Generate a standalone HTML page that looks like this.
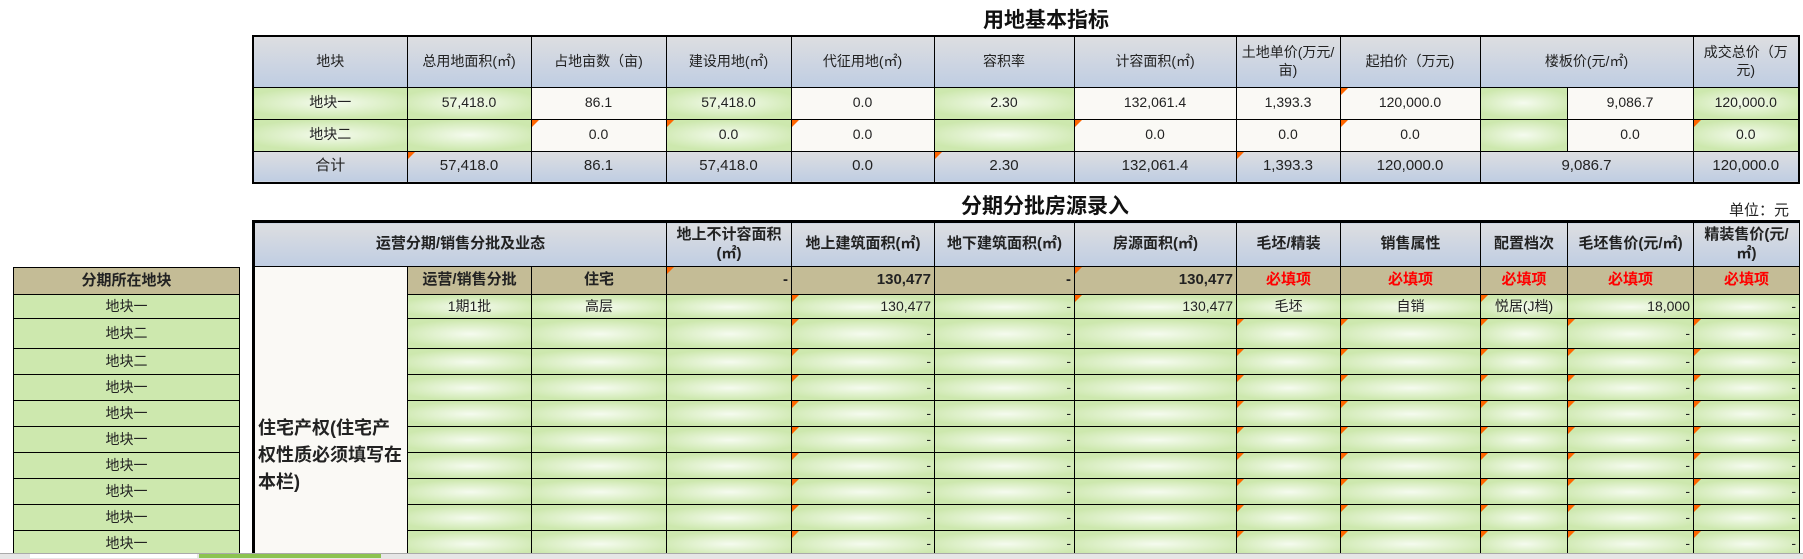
<!DOCTYPE html>
<html><head><meta charset="utf-8"><style>
html,body{margin:0;padding:0;width:1803px;height:558px;overflow:hidden;background:#fff;font-family:"Liberation Sans","Noto Sans CJK SC",sans-serif;color:#222}
table{border-collapse:collapse;table-layout:fixed;position:absolute}
td{border:1px solid #000;padding:0 3px;font-size:14px;text-align:center;white-space:nowrap;overflow:hidden;position:relative;line-height:1.25}
.h{background:linear-gradient(#dddee1,#bfcde2)}
.g{background:radial-gradient(ellipse 60% 50% at center,#f5fbef,#cde8ae)}
.w{background:#faf9f5}
.tan{background:#c4bc96;font-weight:bold;font-size:15px}
.r{text-align:right}
.red{color:#f00}
.b{font-weight:bold}
.t::before{content:"";position:absolute;left:0;top:0;border-top:7px solid #f60;border-right:7px solid transparent}
.title{position:absolute;font-weight:bold;font-size:21px;color:#111}
.lg{background:#cde8ae}
</style></head><body>
<div class="title" style="left:983px;top:4px">用地基本指标</div>
<table style="left:252px;top:35px;border:2px solid #000">
<colgroup><col style="width:154px"><col style="width:124px"><col style="width:135px"><col style="width:125px"><col style="width:143px"><col style="width:140px"><col style="width:162px"><col style="width:104px"><col style="width:140px"><col style="width:87px"><col style="width:126px"><col style="width:106px"></colgroup>
<tr style="height:51px"><td class="h">地块</td><td class="h">总用地面积(㎡)</td><td class="h">占地亩数（亩)</td><td class="h">建设用地(㎡)</td><td class="h">代征用地(㎡)</td><td class="h">容积率</td><td class="h">计容面积(㎡)</td><td class="h" style="white-space:normal">土地单价(万元/亩)</td><td class="h">起拍价（万元)</td><td class="h" colspan="2">楼板价(元/㎡)</td><td class="h" style="white-space:normal">成交总价（万元)</td></tr>
<tr style="height:32px"><td class="g">地块一</td><td class="g">57,418.0</td><td class="w">86.1</td><td class="g">57,418.0</td><td class="w">0.0</td><td class="g">2.30</td><td class="w">132,061.4</td><td class="w">1,393.3</td><td class="w t">120,000.0</td><td class="g"></td><td class="w">9,086.7</td><td class="g">120,000.0</td></tr>
<tr style="height:32px"><td class="g">地块二</td><td class="g"></td><td class="w t">0.0</td><td class="g t">0.0</td><td class="w t">0.0</td><td class="g"></td><td class="w t">0.0</td><td class="w">0.0</td><td class="w t">0.0</td><td class="g"></td><td class="w">0.0</td><td class="g t">0.0</td></tr>
<tr style="height:32px;font-size:15px"><td class="h" style="font-size:15px">合计</td><td class="h t" style="font-size:15px">57,418.0</td><td class="h" style="font-size:15px">86.1</td><td class="h" style="font-size:15px">57,418.0</td><td class="h" style="font-size:15px">0.0</td><td class="h t" style="font-size:15px">2.30</td><td class="h" style="font-size:15px">132,061.4</td><td class="h t" style="font-size:15px">1,393.3</td><td class="h" style="font-size:15px">120,000.0</td><td class="h" colspan="2" style="font-size:15px">9,086.7</td><td class="h" style="font-size:15px">120,000.0</td></tr>
</table>
<div class="title" style="left:961px;top:190px">分期分批房源录入</div>
<div style="position:absolute;left:1729px;top:199px;font-size:15px">单位：元</div>

<table style="left:13px;top:267px">
<colgroup><col style="width:226px"></colgroup>
<tr style="height:27px"><td class="tan">分期所在地块</td></tr>
<tr style="height:24px"><td class="lg">地块一</td></tr>
<tr style="height:30px"><td class="lg">地块二</td></tr>
<tr style="height:26px"><td class="lg">地块二</td></tr>
<tr style="height:26px"><td class="lg">地块一</td></tr>
<tr style="height:26px"><td class="lg">地块一</td></tr>
<tr style="height:26px"><td class="lg">地块一</td></tr>
<tr style="height:26px"><td class="lg">地块一</td></tr>
<tr style="height:26px"><td class="lg">地块一</td></tr>
<tr style="height:26px"><td class="lg">地块一</td></tr>
<tr style="height:26px"><td class="lg">地块一</td></tr>
</table>

<table style="left:252px;top:220px;border-top:3px solid #000;border-left:3px solid #000">
<colgroup><col style="width:154px"><col style="width:124px"><col style="width:135px"><col style="width:125px"><col style="width:143px"><col style="width:140px"><col style="width:162px"><col style="width:104px"><col style="width:140px"><col style="width:87px"><col style="width:126px"><col style="width:106px"></colgroup>
<tr style="height:45px;font-weight:bold"><td class="h b" colspan="3" style="font-size:15px">运营分期/销售分批及业态</td><td class="h b" style="white-space:normal;font-size:15px">地上不计容面积(㎡)</td><td class="h b" style="white-space:normal;font-size:15px">地上建筑面积(㎡)</td><td class="h b" style="white-space:normal;font-size:15px">地下建筑面积(㎡)</td><td class="h b" style="font-size:15px">房源面积(㎡)</td><td class="h b" style="font-size:15px">毛坯/精装</td><td class="h b" style="font-size:15px">销售属性</td><td class="h b" style="font-size:15px">配置档次</td><td class="h b" style="font-size:15px">毛坯售价(元/㎡)</td><td class="h b" style="white-space:normal;font-size:15px">精装售价(元/㎡)</td></tr>
<tr style="height:28px"><td class="w" rowspan="11" style="white-space:normal;text-align:left;font-weight:bold;font-size:18px;line-height:27px;padding:148px 2px 0 3px;vertical-align:top">住宅产权(住宅产权性质必须填写在本栏)</td><td class="tan">运营/销售分批</td><td class="tan">住宅</td><td class="tan t r">-</td><td class="tan r">130,477</td><td class="tan r">-</td><td class="tan t r">130,477</td><td class="tan red">必填项</td><td class="tan red">必填项</td><td class="tan red">必填项</td><td class="tan red">必填项</td><td class="tan red">必填项</td></tr>
<tr style="height:24px"><td class="g">1期1批</td><td class="g">高层</td><td class="g"></td><td class="g t r">130,477</td><td class="g r">-</td><td class="g t r">130,477</td><td class="g">毛坯</td><td class="g">自销</td><td class="g t">悦居(J档)</td><td class="g r">18,000</td><td class="g r">-</td></tr>
<tr style="height:30px"><td class="g"></td><td class="g"></td><td class="g"></td><td class="g t r">-</td><td class="g r">-</td><td class="g"></td><td class="g t"></td><td class="g t"></td><td class="g t"></td><td class="g t r">-</td><td class="g t r">-</td></tr>
<tr style="height:26px"><td class="g"></td><td class="g"></td><td class="g"></td><td class="g t r">-</td><td class="g r">-</td><td class="g"></td><td class="g t"></td><td class="g t"></td><td class="g t"></td><td class="g t r">-</td><td class="g t r">-</td></tr>
<tr style="height:26px"><td class="g"></td><td class="g"></td><td class="g"></td><td class="g t r">-</td><td class="g r">-</td><td class="g"></td><td class="g t"></td><td class="g t"></td><td class="g t"></td><td class="g t r">-</td><td class="g t r">-</td></tr>
<tr style="height:26px"><td class="g"></td><td class="g"></td><td class="g"></td><td class="g t r">-</td><td class="g r">-</td><td class="g"></td><td class="g t"></td><td class="g t"></td><td class="g t"></td><td class="g t r">-</td><td class="g t r">-</td></tr>
<tr style="height:26px"><td class="g"></td><td class="g"></td><td class="g"></td><td class="g t r">-</td><td class="g r">-</td><td class="g"></td><td class="g t"></td><td class="g t"></td><td class="g t"></td><td class="g t r">-</td><td class="g t r">-</td></tr>
<tr style="height:26px"><td class="g"></td><td class="g"></td><td class="g"></td><td class="g t r">-</td><td class="g r">-</td><td class="g"></td><td class="g t"></td><td class="g t"></td><td class="g t"></td><td class="g t r">-</td><td class="g t r">-</td></tr>
<tr style="height:26px"><td class="g"></td><td class="g"></td><td class="g"></td><td class="g t r">-</td><td class="g r">-</td><td class="g"></td><td class="g t"></td><td class="g t"></td><td class="g t"></td><td class="g t r">-</td><td class="g t r">-</td></tr>
<tr style="height:26px"><td class="g"></td><td class="g"></td><td class="g"></td><td class="g t r">-</td><td class="g r">-</td><td class="g"></td><td class="g t"></td><td class="g t"></td><td class="g t"></td><td class="g t r">-</td><td class="g t r">-</td></tr>
<tr style="height:26px"><td class="g"></td><td class="g"></td><td class="g"></td><td class="g t r">-</td><td class="g r">-</td><td class="g"></td><td class="g t"></td><td class="g t"></td><td class="g t"></td><td class="g t r">-</td><td class="g t r">-</td></tr>
</table>
<div style="position:absolute;left:0;top:553px;width:1803px;height:5px;background:#e6e6e6;border-top:1px solid #aaa"></div>
<div style="position:absolute;left:30px;top:554px;width:167px;height:4px;background:#fff"></div>
<div style="position:absolute;left:199px;top:554px;width:182px;height:4px;background:#8cc350"></div>
</body></html>
